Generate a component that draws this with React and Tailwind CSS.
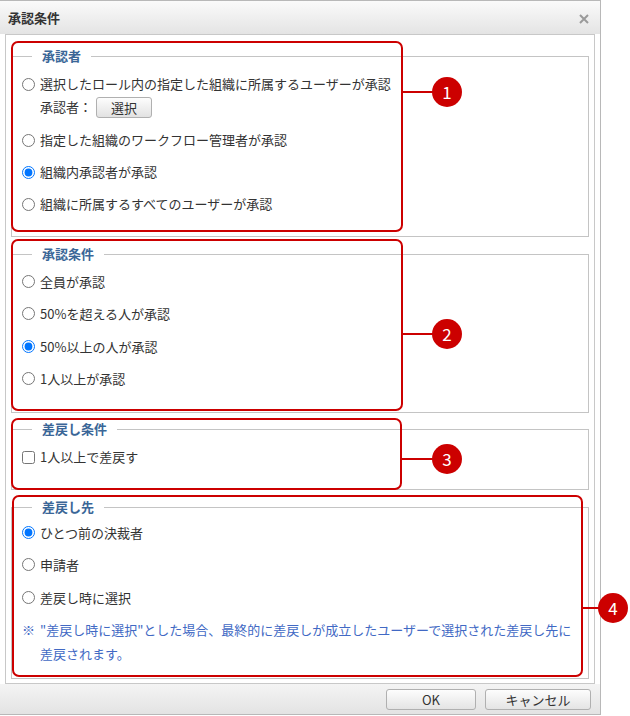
import React from 'react'

const FONT = { fontFamily: '"Noto Sans CJK JP", "Noto Sans", sans-serif' }

function Radio({ checked, children }) {
  return (
    <label className="flex items-center gap-[5px]">
      <input type="radio" defaultChecked={checked} className="w-[13px] h-[13px] shrink-0" />
      <span>{children}</span>
    </label>
  )
}

function Group({ title, className = '', children }) {
  return (
    <fieldset className={`border border-[#c4c4c4] mx-[5px] px-[10px] ${className}`}>
      <legend className="ml-[10px] px-[10px] text-[13px] leading-[14px] font-bold text-[#3a6697]">{title}</legend>
      {children}
    </fieldset>
  )
}

function Marker({ n, className }) {
  return (
    <div className={`absolute w-[30px] h-[30px] rounded-full bg-[#cc0000] text-white flex items-center justify-center text-[17px] ${className}`}>
      {n}
    </div>
  )
}

export default function App() {
  return (
    <div className="relative w-[630px] h-[716px] bg-white overflow-hidden text-[13px] text-[#333]" style={FONT}>
      <div className="w-[601px] border-t border-r border-b border-[#b8b8b8] flex flex-col bg-white">
        {/* header */}
        <div className="h-[33px] flex items-center justify-between pl-[8px] pr-[11px] bg-gradient-to-b from-[#fafafa] to-[#e4e4e4]">
          <span className="font-bold text-[13px] text-[#333]">承認条件</span>
          <svg width="10" height="10" viewBox="0 0 10 10" className="mt-[2px]">
            <path d="M1 1 L9 9 M9 1 L1 9" stroke="#9a9a9a" strokeWidth="2" />
          </svg>
        </div>

        {/* body */}
        <div className="px-[5px]">
          <div className="border border-[#c8c8c8] pt-[14px] pb-[4px]">
            <Group title="承認者" className="pt-[9px] pb-[16px]">
              <div className="h-[24px] flex items-center">
                <Radio>選択したロール内の指定した組織に所属するユーザーが承認</Radio>
              </div>
              <div className="h-[22px] flex items-center pl-[18px] gap-[4px]">
                <span>承認者：</span>
                <button className="h-[21px] w-[56px] border border-[#b0b0b0] rounded-[3px] bg-gradient-to-b from-[#fdfdfd] to-[#e2e2e2] text-[13px] leading-none">選択</button>
              </div>
              <div className="mt-[6px] h-[32px] flex items-center"><Radio>指定した組織のワークフロー管理者が承認</Radio></div>
              <div className="h-[32px] flex items-center"><Radio checked>組織内承認者が承認</Radio></div>
              <div className="h-[32px] flex items-center"><Radio>組織に所属するすべてのユーザーが承認</Radio></div>
            </Group>

            <Group title="承認条件" className="mt-[10px] pt-[4px] pb-[17px]">
              <div className="h-[32.5px] flex items-center"><Radio>全員が承認</Radio></div>
              <div className="h-[32.5px] flex items-center"><Radio>50%を超える人が承認</Radio></div>
              <div className="h-[32.5px] flex items-center"><Radio checked>50%以上の人が承認</Radio></div>
              <div className="h-[32.5px] flex items-center"><Radio>1人以上が承認</Radio></div>
            </Group>

            <Group title="差戻し条件" className="mt-[9px] pt-[5px] pb-[16px]">
              <label className="h-[32px] flex items-center gap-[5px]">
                <input type="checkbox" className="w-[13px] h-[13px]" />
                <span>1人以上で差戻す</span>
              </label>
            </Group>

            <Group title="差戻し先" className="mt-[10px] pt-[2px] pb-[12px]">
              <div className="h-[32.5px] flex items-center"><Radio checked>ひとつ前の決裁者</Radio></div>
              <div className="h-[32.5px] flex items-center"><Radio>申請者</Radio></div>
              <div className="h-[32.5px] flex items-center"><Radio>差戻し時に選択</Radio></div>
              <div className="mt-[4.5px] text-[#4169c4] leading-[24px] flex">
                <span className="w-[18px] shrink-0">※</span>
                <span>"差戻し時に選択"とした場合、最終的に差戻しが成立したユーザーで選択された差戻し先に差戻されます。</span>
              </div>
            </Group>
          </div>
        </div>

        {/* footer */}
        <div className="h-[30px] flex items-start justify-end gap-[9px] pt-[5px] pr-[9px] bg-gradient-to-b from-[#f4f4f4] to-[#e3e3e3]">
          <button className="w-[90px] h-[21px] border border-[#b0b0b0] rounded-[3px] bg-gradient-to-b from-[#fdfdfd] to-[#e4e4e4] text-[13px] leading-none">OK</button>
          <button className="w-[106px] h-[21px] border border-[#b0b0b0] rounded-[3px] bg-gradient-to-b from-[#fdfdfd] to-[#e4e4e4] text-[13px] leading-none">キャンセル</button>
        </div>
      </div>

      {/* annotations */}
      <div className="absolute left-[11px] top-[41px] w-[392px] h-[191px] border-2 border-[#cc0000] rounded-[7px]" />
      <div className="absolute left-[403px] top-[91px] w-[30px] h-[2px] bg-[#cc0000]" />
      <Marker n="1" className="left-[432px] top-[77px]" />

      <div className="absolute left-[11px] top-[239px] w-[392px] h-[172px] border-2 border-[#cc0000] rounded-[7px]" />
      <div className="absolute left-[403px] top-[333px] w-[30px] h-[2px] bg-[#cc0000]" />
      <Marker n="2" className="left-[432px] top-[319px]" />

      <div className="absolute left-[11px] top-[418px] w-[391px] h-[72px] border-2 border-[#cc0000] rounded-[7px]" />
      <div className="absolute left-[402px] top-[458px] w-[31px] h-[2px] bg-[#cc0000]" />
      <Marker n="3" className="left-[432px] top-[444px]" />

      <div className="absolute left-[12px] top-[495px] w-[571px] h-[182px] border-2 border-[#cc0000] rounded-[7px]" />
      <div className="absolute left-[583px] top-[607px] w-[16px] h-[2px] bg-[#cc0000]" />
      <Marker n="4" className="left-[598px] top-[593px]" />
    </div>
  )
}
